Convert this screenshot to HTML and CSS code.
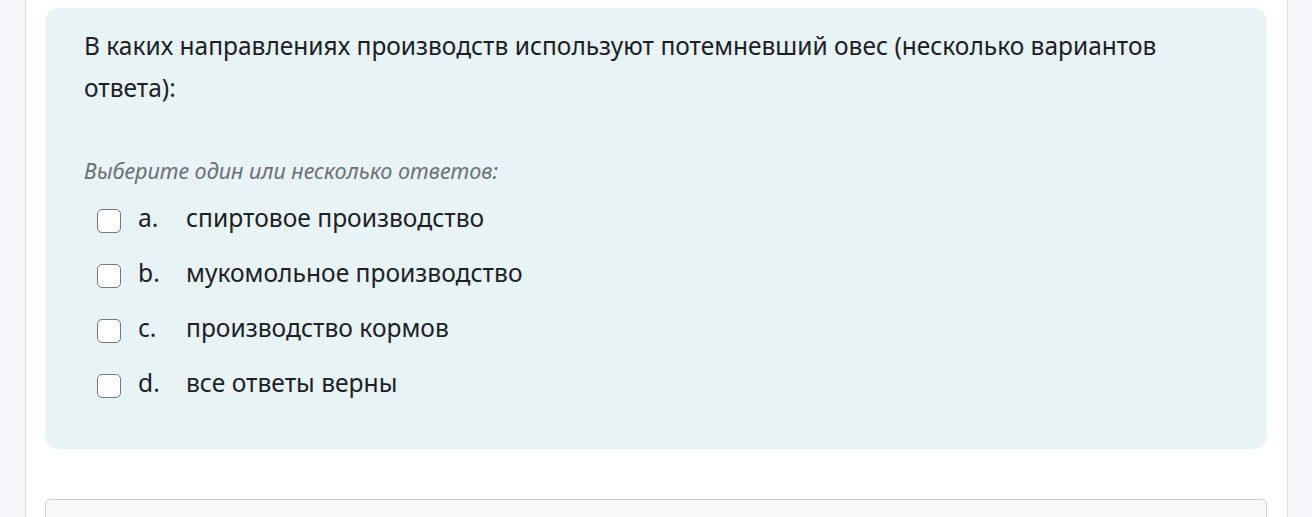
FILE: index.html
```html
<!DOCTYPE html>
<html lang="ru">
<head>
<meta charset="utf-8">
<link rel="stylesheet" href="styles.css">
</head>
<body>
<div class="page">
  <div class="side side-left"></div>
  <main class="main">
    <section class="qcard">
      <div class="qtext">В каких направлениях производств используют потемневший овес (несколько вариантов ответа):</div>
      <div class="prompt">Выберите один или несколько ответов:</div>
      <div class="answers">
        <label class="opt"><span class="box"></span><span class="letter">a.</span><span class="atext">спиртовое производство</span></label>
        <label class="opt"><span class="box"></span><span class="letter">b.</span><span class="atext">мукомольное производство</span></label>
        <label class="opt"><span class="box"></span><span class="letter">c.</span><span class="atext">производство кормов</span></label>
        <label class="opt"><span class="box"></span><span class="letter">d.</span><span class="atext">все ответы верны</span></label>
      </div>
    </section>
    <section class="nextcard"></section>
  </main>
  <div class="side side-right"></div>
</div>
</body>
</html>
```
FILE: styles.css
```css
html, body {
  margin: 0;
  padding: 0;
  height: 100%;
  overflow: hidden;
}
body {
  font-family: "Noto Sans", "Open Sans", sans-serif;
  color: #1d2125;
  background: #f5f6fa;
}
.page {
  display: flex;
  height: 517px;
}
.side {
  background: #f5f6fa;
}
.side-left {
  width: 25px;
  border-right: 1px solid #dcdde0;
}
.side-right {
  flex: 1;
  border-left: 1px solid #dcdde0;
}
.main {
  width: 1261px;
  background: #fff;
  padding: 8px 20px 0 19px;
  box-sizing: border-box;
}
.qcard {
  background: #e7f3f5;
  border-radius: 14px;
  padding: 17px 38px 0 39px;
  height: 441px;
  box-sizing: border-box;
}
.qtext {
  font-size: 24.5px;
  line-height: 42px;
  color: #1d2125;
  padding-right: 55px;
}
.prompt {
  margin-top: 47px;
  font-size: 21.6px;
  font-style: italic;
  color: #6c7075;
  line-height: 30px;
}
.answers {
  margin-top: 18px;
  padding-left: 13px;
  display: flex;
  flex-direction: column;
  gap: 29.3px;
}
.opt {
  display: flex;
  align-items: center;
  height: 26px;
  font-size: 24.6px;
  color: #1d2125;
}
.box {
  width: 22px;
  height: 22px;
  margin-top: 7px;
  border: 1.8px solid #75797d;
  border-radius: 5px;
  background: #fff;
  flex: none;
}
.letter {
  margin-left: 17px;
  width: 48px;
}
.nextcard {
  margin-top: 50px;
  height: 40px;
  border: 1px solid #c9cbce;
  border-radius: 5px;
  background: #f8f9fb;
}
```
